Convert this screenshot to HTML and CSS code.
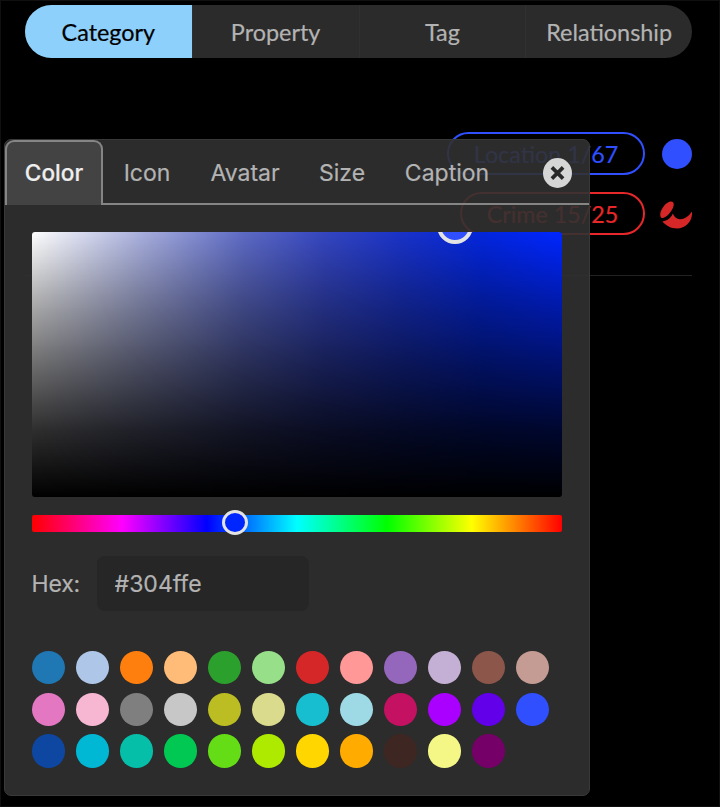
FILE: index.html
```html
<!DOCTYPE html>
<html lang="en">
<head>
<meta charset="utf-8">
<title>Category style</title>
<link rel="stylesheet" href="styles.css">
</head>
<body>
<main class="page">
  <nav class="segments">
    <button class="segment segment--active">Category</button>
    <button class="segment">Property</button>
    <button class="segment">Tag</button>
    <button class="segment">Relationship</button>
  </nav>
  <section class="legend">
    <div class="legend-row">
      <span class="pill pill--location">Location 1/67</span>
      <span class="dot"></span>
    </div>
    <div class="legend-row">
      <span class="pill pill--crime">Crime 15/25</span>
      <svg class="crime-icon" viewBox="0 0 34 34"><path d="M3.3 20.7C1.2 18.5 2.4 13.5 6 9C9 5 13 3.5 15 5.2C17.2 7.5 14.3 13.5 10.4 17.5C7.6 20.2 5 21.7 3.3 20.7Z"/><path d="M4.4 24.4C9.5 24 13.5 20.5 14.8 16.6C16.5 21 19.5 22.6 22.5 22.2C27.5 21.8 31 18.5 34 14.4C34.8 23.5 28.5 31.4 19 31.4C13 31.4 8 28.6 4.4 24.4Z"/></svg>
    </div>
  </section>
  <section class="panel">
    <header class="tabs">
      <button class="tab tab--color">Color</button>
      <button class="tab tab--icon">Icon</button>
      <button class="tab tab--avatar">Avatar</button>
      <button class="tab tab--size">Size</button>
      <button class="tab tab--caption">Caption</button>
      <div class="tab-end"><button class="close" aria-label="Close"><svg viewBox="0 0 30 30"><path d="M9.2 9.2L20.8 20.8M20.8 9.2L9.2 20.8"/></svg></button></div>
    </header>
    <div class="panel-body">
      <div class="field"><span class="field-handle"></span></div>
      <div class="hue"><span class="hue-handle"></span></div>
      <div class="hex"><label for="hex">Hex:</label><input id="hex" value="#304ffe"></div>
      <div class="swatches">
        <i style="background:#1f77b4"></i><i style="background:#aec7e8"></i><i style="background:#ff7f0e"></i><i style="background:#ffbb78"></i><i style="background:#2ca02c"></i><i style="background:#98df8a"></i><i style="background:#d62728"></i><i style="background:#ff9896"></i><i style="background:#9467bd"></i><i style="background:#c5b0d5"></i><i style="background:#8c564b"></i><i style="background:#c49c94"></i>
        <i style="background:#e377c2"></i><i style="background:#f7b6d2"></i><i style="background:#7f7f7f"></i><i style="background:#c7c7c7"></i><i style="background:#bcbd22"></i><i style="background:#dbdb8d"></i><i style="background:#17becf"></i><i style="background:#9edae5"></i><i style="background:#c51162"></i><i style="background:#aa00ff"></i><i style="background:#6200ea"></i><i style="background:#304ffe"></i>
        <i style="background:#0d47a1"></i><i style="background:#00b8d4"></i><i style="background:#05bfa8"></i><i style="background:#00c853"></i><i style="background:#64dd17"></i><i style="background:#aeea00"></i><i style="background:#ffd600"></i><i style="background:#ffab00"></i><i style="background:#3e2723"></i><i style="background:#f4f786"></i><i style="background:#750068"></i>
      </div>
    </div>
  </section>
</main>
</body>
</html>
```
FILE: styles.css
```css
* { box-sizing: border-box; }
body { margin: 0; background: #000; }
button, input { border: 0; margin: 0; padding: 0; background: none; font: inherit; color: inherit; }
.page {
  position: relative;
  width: 720px;
  height: 807px;
  padding: 5px 28px 0 25px;
  overflow: hidden;
  box-shadow: inset 0 0 0 1px #101010;
  font-family: Lato, sans-serif;
}
.segments {
  display: grid;
  grid-template-columns: repeat(4, 1fr);
  height: 53px;
  overflow: hidden;
  border-radius: 27px;
  background: #2b2b2b;
}
.segment {
  padding-top: 1px;
  border-left: 1px solid #303030;
  color: #b3b3b3;
  font-size: 23.4px;
  line-height: 52px;
  -webkit-text-stroke: .2px;
}
.segment--active { border: 0; background: #8dd0fb; color: #000; }
.legend {
  display: flex;
  flex-direction: column;
  gap: 17px;
  height: 218px;
  padding-top: 74px;
  border-bottom: 1px solid #222;
}
.legend-row { display: flex; justify-content: flex-end; align-items: center; gap: 17px; }
.pill {
  height: 43px;
  border: 2px solid;
  border-radius: 22px;
  font-size: 23.3px;
  line-height: 40px;
  text-align: center;
  -webkit-text-stroke: .2px;
}
.pill--location { width: 198px; color: #304ffe; }
.pill--crime { width: 185px; color: #e6282a; }
.dot { width: 30px; height: 30px; border-radius: 50%; background: #304ffe; }
.crime-icon { width: 34px; height: 34px; margin-left: -4px; fill: #d62728; }
.panel {
  position: absolute;
  left: 4px;
  top: 139px;
  width: 586px;
  height: 657px;
  border: 1px solid #393939;
  border-radius: 7px;
  background: rgba(49, 49, 49, .9);
  color: #b3b3b3;
  font-family: Inter, sans-serif;
}
.tabs { display: flex; height: 65px; }
.tab { padding-top: 3px; border-bottom: 2px solid #858585; font-size: 23px; line-height: 60px; -webkit-text-stroke: .2px; }
.tab--color { width: 98px; padding: 0 0 1px; border: 2px solid #858585; border-bottom: 0; border-radius: 9px 9px 0 0; background: #434343; color: #eee; font-size: 22.6px; font-weight: 500; line-height: 62px; }
.tab--icon { width: 88px; }
.tab--avatar { width: 108px; }
.tab--size { width: 86px; }
.tab--caption { width: 124px; }
.tab-end { flex: 1; display: flex; justify-content: flex-end; align-items: center; padding: 2px 17px 0 0; border-bottom: 2px solid #858585; }
.close { width: 29px; height: 30px; border-radius: 50%; background: #d6d6d6; }
.close svg { display: block; width: 29px; height: 30px; fill: none; stroke: #292929; stroke-width: 3.8; }
.panel-body { padding: 27px 27px 0 26.6px; }
.field {
  position: relative;
  height: 265px;
  overflow: hidden;
  border-radius: 3px;
  background:
    linear-gradient(to bottom, rgba(0, 0, 0, 0), rgba(0, 0, 0, .3) 25%, rgba(0, 0, 0, .57) 50%, rgba(0, 0, 0, .82) 75%, #000),
    linear-gradient(to right, #fff, #aab1de 20%, #5d6ac4 40%, #3546c0 55%, #1932c8 70%, #0326dd 85%, #0026ff);
}
.field-handle { position: absolute; left: 405px; top: -24px; width: 36px; height: 36px; border: 4px solid #e3e3e3; border-radius: 50%; background: #304ffe; }
.hue {
  position: relative;
  height: 17px;
  margin-top: 18px;
  border-radius: 2px;
  background: linear-gradient(to left, #f00 0%, #ff0 17%, #0f0 33%, #0ff 50%, #00f 67%, #f0f 83%, #f00 100%);
}
.hue-handle { position: absolute; left: 190px; top: -5px; width: 26px; height: 25px; border: 3px solid #e3e3e3; border-radius: 50%; background: #0026ff; }
.hex { display: flex; align-items: center; gap: 17px; margin-top: 24px; font-size: 23px; -webkit-text-stroke: .2px; }
.hex label { width: 48px; white-space: nowrap; letter-spacing: -.2px; }
.hex input { width: 212px; height: 55px; padding: 0 18px; border-radius: 8px; background: #262626; }
.swatches { display: grid; grid-template-columns: repeat(12, 33.4px); gap: 8.3px 10.63px; margin-top: 40px; }
.swatches i { height: 33.4px; border-radius: 50%; }
```
